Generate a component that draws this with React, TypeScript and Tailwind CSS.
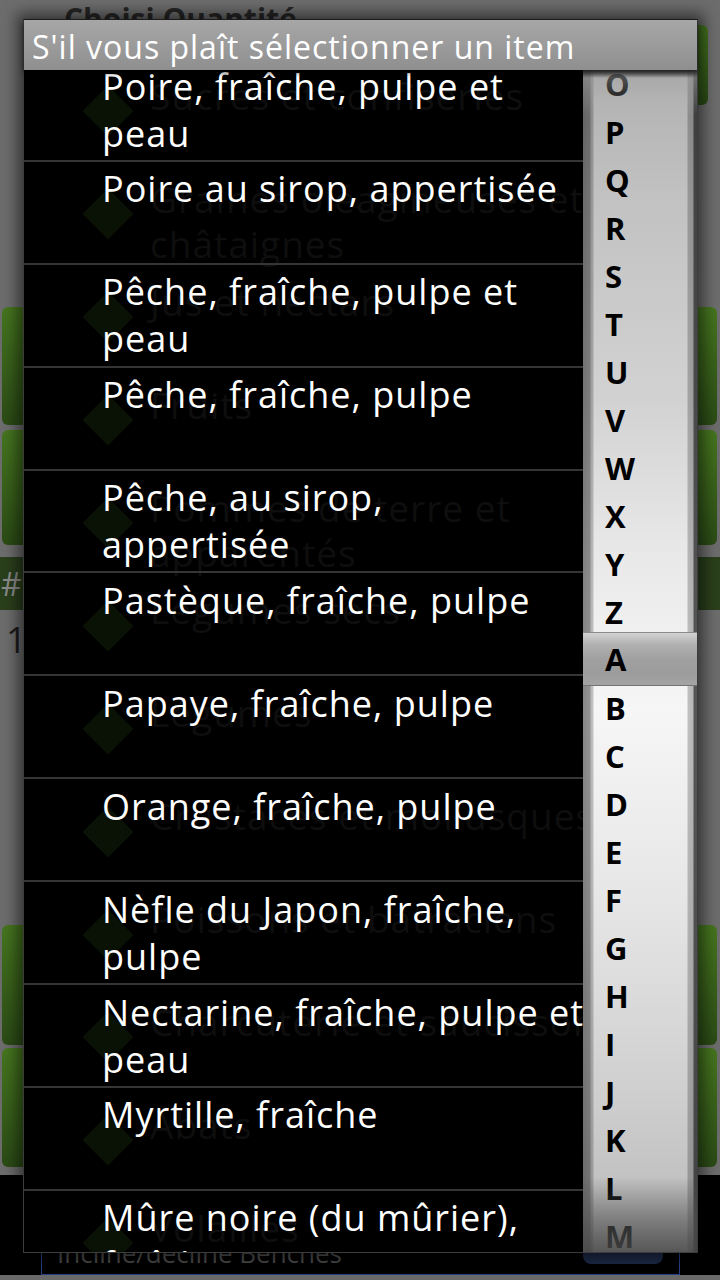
import React from "react";

const items: string[][] = [
  ["Poire, fraîche, pulpe et", "peau"],
  ["Poire au sirop, appertisée"],
  ["Pêche, fraîche, pulpe et", "peau"],
  ["Pêche, fraîche, pulpe"],
  ["Pêche, au sirop,", "appertisée"],
  ["Pastèque, fraîche, pulpe"],
  ["Papaye, fraîche, pulpe"],
  ["Orange, fraîche, pulpe"],
  ["Nèfle du Japon, fraîche,", "pulpe"],
  ["Nectarine, fraîche, pulpe et", "peau"],
  ["Myrtille, fraîche"],
  ["Mûre noire (du mûrier),", "fraîche"],
];

const ghosts: string[][] = [
  ["Sucres et confiseries"],
  ["Graines oléagineuses et", "châtaignes"],
  ["Jus et nectars"],
  ["Fruits"],
  ["Pommes de terre et", "apparentés"],
  ["Légumes secs"],
  ["Légumes"],
  ["Crustacés et mollusques"],
  ["Poissons et batraciens"],
  ["Charcuterie et saucisson"],
  ["Abats"],
  ["Volailles"],
];

const before = "OPQRSTUVWXYZ".split("");
const after = "BCDEFGHIJKLM".split("");

function Green({ className }: { className: string }) {
  return (
    <div
      className={
        "rounded-[6px] bg-[linear-gradient(to_bottom,#46761f,#2b4b16)] " + className
      }
    />
  );
}

function Background() {
  return (
    <div className="flex flex-col w-full h-full">
      <div className="h-[25px] shrink-0 pl-[64px] pt-[4px] text-[30px] leading-[30px] font-bold text-[#262626] whitespace-nowrap">
        Choisi Quantité
      </div>
      <div className="h-[80px] shrink-0 flex justify-end pr-[12px]">
        <Green className="w-[30px] h-full" />
      </div>
      <div className="h-[202px] shrink-0" />
      <div className="h-[118px] shrink-0 flex justify-between px-[2px]">
        <Green className="w-[40px] h-full" />
        <Green className="w-[40px] h-full mr-[1px]" />
      </div>
      <div className="h-[5px] shrink-0" />
      <div className="h-[115px] shrink-0 flex justify-between px-[2px]">
        <Green className="w-[40px] h-full" />
        <Green className="w-[40px] h-full mr-[1px]" />
      </div>
      <div className="h-[12px] shrink-0" />
      <div className="h-[53px] shrink-0 bg-[#2a3f1c] pl-[1px] text-[32px] leading-[53px] text-[#8c8c8c]">
        #
      </div>
      <div className="h-[60px] shrink-0 pl-[6px] text-[36px] leading-[60px] text-[#1c1c1c]">
        1
      </div>
      <div className="h-[255px] shrink-0" />
      <div className="h-[120px] shrink-0 flex justify-between px-[2px]">
        <Green className="w-[40px] h-full" />
        <Green className="w-[40px] h-full mr-[1px]" />
      </div>
      <div className="h-[3px] shrink-0" />
      <div className="h-[119px] shrink-0 flex justify-between px-[2px]">
        <Green className="w-[40px] h-full" />
        <Green className="w-[40px] h-full mr-[1px]" />
      </div>
      <div className="h-[8px] shrink-0" />
      <div className="h-[100px] shrink-0 bg-black pl-[41px] pr-[40px] flex flex-col justify-end">
        <div className="h-[90px] border border-[#25408a] flex items-end justify-between pl-[15px] pr-[16px] pb-[6px]">
          <span className="text-[26px] leading-[30px] text-[#4c4c4c] whitespace-nowrap">
            Incliné/décliné Benches
          </span>
          <div className="w-[80px] h-[40px] mb-[4px] rounded-[8px] bg-[#1c2a47]" />
        </div>
      </div>
      <div className="h-[5px] shrink-0 bg-[#6a6a6a]" />
    </div>
  );
}

function IndexBar() {
  return (
    <div className="relative w-[114px] h-full overflow-hidden bg-[linear-gradient(to_bottom,#5a5a5a_0px,#a6a6a6_8px,#b4b4b4_30px,#c2c2c2_130px,#d2d2d2_330px,#e8e8e8_480px,#f0f0f0_560px,#f6f6f6_640px,#e6e6e6_830px,#cecece_1030px,#c2c2c2_1110px,#b8b8b8_1182px)]">
      <div className="absolute inset-0 bg-[linear-gradient(to_right,rgba(0,0,0,0.45)_0px,rgba(0,0,0,0.4)_7px,rgba(0,0,0,0.25)_8px,rgba(0,0,0,0.2)_10px,rgba(0,0,0,0)_11px,rgba(0,0,0,0)_104px,rgba(0,0,0,0.22)_105px,rgba(0,0,0,0.25)_110px,rgba(0,0,0,0.65)_111px,rgba(0,0,0,0.65)_114px)]" />
      <div className="relative flex flex-col mt-[-10.5px] font-bold text-[31px] text-black">
        {before.map((l) => (
          <div key={l} className="h-[48px] leading-[48px] pl-[22px] shrink-0">
            {l}
          </div>
        ))}
        <div className="h-[54px] leading-[52px] pl-[22px] mt-[-4px] mb-[-2px] shrink-0 border-t border-b border-t-[#8a8a8a] border-b-[#747474] bg-[linear-gradient(to_bottom,#d2d2d2_0px,#b0b0b0_12px,#a0a0a0_26px,#9c9c9c_40px,#a4a4a4_52px)]">
          A
        </div>
        {after.map((l) => (
          <div key={l} className="h-[48px] leading-[48px] pl-[22px] shrink-0">
            {l}
          </div>
        ))}
      </div>
      <div className="absolute left-0 right-0 top-0 h-[45px] bg-[linear-gradient(to_bottom,rgba(70,70,70,0.9)_0px,rgba(176,176,176,0.45)_8px,rgba(176,176,176,0)_45px)]" />
      <div className="absolute left-0 right-0 bottom-0 h-[75px] bg-[linear-gradient(to_bottom,rgba(80,80,80,0)_0px,rgba(80,80,80,0.55)_40px,rgba(70,70,70,0.85)_75px)]" />
    </div>
  );
}

export default function App() {
  return (
    <div className="relative w-[720px] h-[1280px] overflow-hidden bg-[#6d6d6d] font-['Open_Sans',sans-serif]">
      <Background />
      <div className="absolute left-[23px] top-[19px] w-[675px] h-[1234px] border border-[#3c3c3c] border-t-[#1c1c1c] shadow-[0_0_14px_6px_rgba(0,0,0,0.5)] flex flex-col bg-black">
        <div className="h-[50px] shrink-0 bg-[linear-gradient(to_bottom,#a7a7a7,#8f8f8f)] pl-[8px] pt-[5px] text-[32px] leading-[44px] tracking-[1px] text-white whitespace-nowrap shadow-[0_3px_5px_rgba(0,0,0,0.6)] relative z-20">
          S'il vous plaît sélectionner un item
        </div>
        <div className="flex flex-1 min-h-0">
          <div className="relative w-[559px] h-full overflow-hidden bg-black">
            <div className="absolute inset-0 flex flex-col mt-[-13px]">
              {ghosts.map((g, i) => (
                <div key={i} className="h-[102.9px] shrink-0 flex items-start">
                  <div className="w-[36px] h-[36px] rotate-45 ml-[66px] shrink-0 self-center mt-[6px] bg-[#0a1206]" />
                  <div className="ml-[24px] pt-[16px] text-[37px] leading-[45px] tracking-[1px] text-[#0e0e0e] whitespace-nowrap">
                    {g.map((line, j) => (
                      <div key={j}>{line}</div>
                    ))}
                  </div>
                </div>
              ))}
            </div>
            <div className="relative flex flex-col mt-[-13px]">
              {items.map((it, i) => (
                <div
                  key={i}
                  className="h-[102.9px] shrink-0 border-t-2 border-[#353535] pt-[3.5px] pl-[78px] text-[36px] leading-[47px] tracking-[1px] text-white whitespace-nowrap"
                >
                  {it.map((line, j) => (
                    <div key={j}>{line}</div>
                  ))}
                </div>
              ))}
            </div>
          </div>
          <IndexBar />
        </div>
      </div>
    </div>
  );
}
